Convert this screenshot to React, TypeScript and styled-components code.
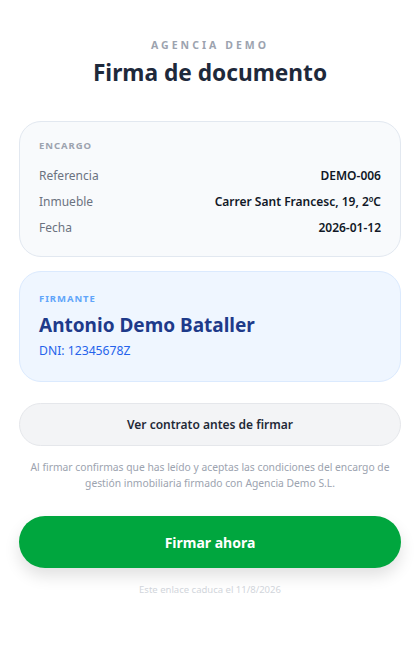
import React from "react";
import styled, { createGlobalStyle } from "styled-components";

const Global = createGlobalStyle`
  * { box-sizing: border-box; }
  html, body { margin: 0; padding: 0; background: #ffffff; }
  body { font-family: "Noto Sans", "Open Sans", sans-serif; -webkit-font-smoothing: antialiased; }
`;

const Page = styled.main`
  padding: 37px 19px 40px;
  display: flex;
  flex-direction: column;
`;

const Header = styled.header`
  display: flex;
  flex-direction: column;
  align-items: center;
  margin-bottom: 33px;
`;

const Agency = styled.div`
  font-size: 10.5px;
  font-weight: 700;
  letter-spacing: 0.29em;
  color: #9ca3af;
  text-transform: uppercase;
  line-height: 16px;
  margin-bottom: 5px;
`;

const Title = styled.h1`
  margin: 0;
  font-size: 22.7px;
  font-weight: 700;
  color: #1e293b;
  line-height: 30px;
`;

const Card = styled.section<{ $tone: "gray" | "blue" }>`
  border-radius: 22px;
  border: 1px solid ${(p) => (p.$tone === "blue" ? "#dbeafe" : "#e2e8f0")};
  background: ${(p) => (p.$tone === "blue" ? "#eff6ff" : "#f8fafc")};
  padding: ${(p) => (p.$tone === "blue" ? "19px 19px 20px" : "16px 19px 16px")};
  margin-bottom: 14px;
`;

const Label = styled.div<{ $tone: "gray" | "blue" }>`
  font-size: 9.5px;
  font-weight: 700;
  letter-spacing: 0.1em;
  text-transform: uppercase;
  color: ${(p) => (p.$tone === "blue" ? "#60a5fa" : "#9ca3af")};
  line-height: 16px;
  margin-bottom: ${(p) => (p.$tone === "blue" ? "4px" : "8px")};
`;

const Row = styled.div`
  display: flex;
  justify-content: space-between;
  align-items: center;
  height: 26px;
  font-size: 12px;
`;

const RowKey = styled.span`
  color: #6b7280;
`;

const RowValue = styled.span`
  color: #111827;
  font-weight: 600;
`;

const Name = styled.div`
  font-size: 19px;
  font-weight: 700;
  color: #1e3a8a;
  line-height: 28px;
  margin-top: 3px;
`;

const Dni = styled.div`
  font-size: 12.2px;
  color: #2563eb;
  line-height: 20px;
  margin-top: 2px;
`;

const SecondaryButton = styled.button`
  margin-top: 7px;
  height: 43px;
  width: 100%;
  border-radius: 999px;
  border: 1px solid #e5e7eb;
  background: #f3f4f6;
  color: #1f2937;
  font-family: inherit;
  font-size: 12px;
  font-weight: 600;
  cursor: pointer;
`;

const Disclaimer = styled.p`
  margin: 13px 0 0;
  text-align: center;
  font-size: 10.3px;
  line-height: 16px;
  color: #9ca3af;
`;

const PrimaryButton = styled.button`
  margin-top: 25px;
  height: 52px;
  width: 100%;
  border: none;
  border-radius: 999px;
  background: #00a63e;
  color: #ffffff;
  font-family: inherit;
  font-size: 14px;
  font-weight: 700;
  box-shadow: 0 8px 16px rgba(0, 0, 0, 0.12);
  cursor: pointer;
`;

const Expiry = styled.div`
  margin-top: 15px;
  text-align: center;
  font-size: 9.5px;
  color: #d1d5db;
  line-height: 14px;
`;

export default function App() {
  const rows = [
    ["Referencia", "DEMO-006"],
    ["Inmueble", "Carrer Sant Francesc, 19, 2ºC"],
    ["Fecha", "2026-01-12"],
  ];
  return (
    <>
      <Global />
      <Page>
        <Header>
          <Agency>Agencia Demo</Agency>
          <Title>Firma de documento</Title>
        </Header>
        <Card $tone="gray">
          <Label $tone="gray">Encargo</Label>
          {rows.map(([k, v]) => (
            <Row key={k}>
              <RowKey>{k}</RowKey>
              <RowValue>{v}</RowValue>
            </Row>
          ))}
        </Card>
        <Card $tone="blue">
          <Label $tone="blue">Firmante</Label>
          <Name>Antonio Demo Bataller</Name>
          <Dni>DNI: 12345678Z</Dni>
        </Card>
        <SecondaryButton>Ver contrato antes de firmar</SecondaryButton>
        <Disclaimer>
          Al firmar confirmas que has leído y aceptas las condiciones del encargo de gestión inmobiliaria firmado con Agencia Demo S.L.
        </Disclaimer>
        <PrimaryButton>Firmar ahora</PrimaryButton>
        <Expiry>Este enlace caduca el 11/8/2026</Expiry>
      </Page>
    </>
  );
}
